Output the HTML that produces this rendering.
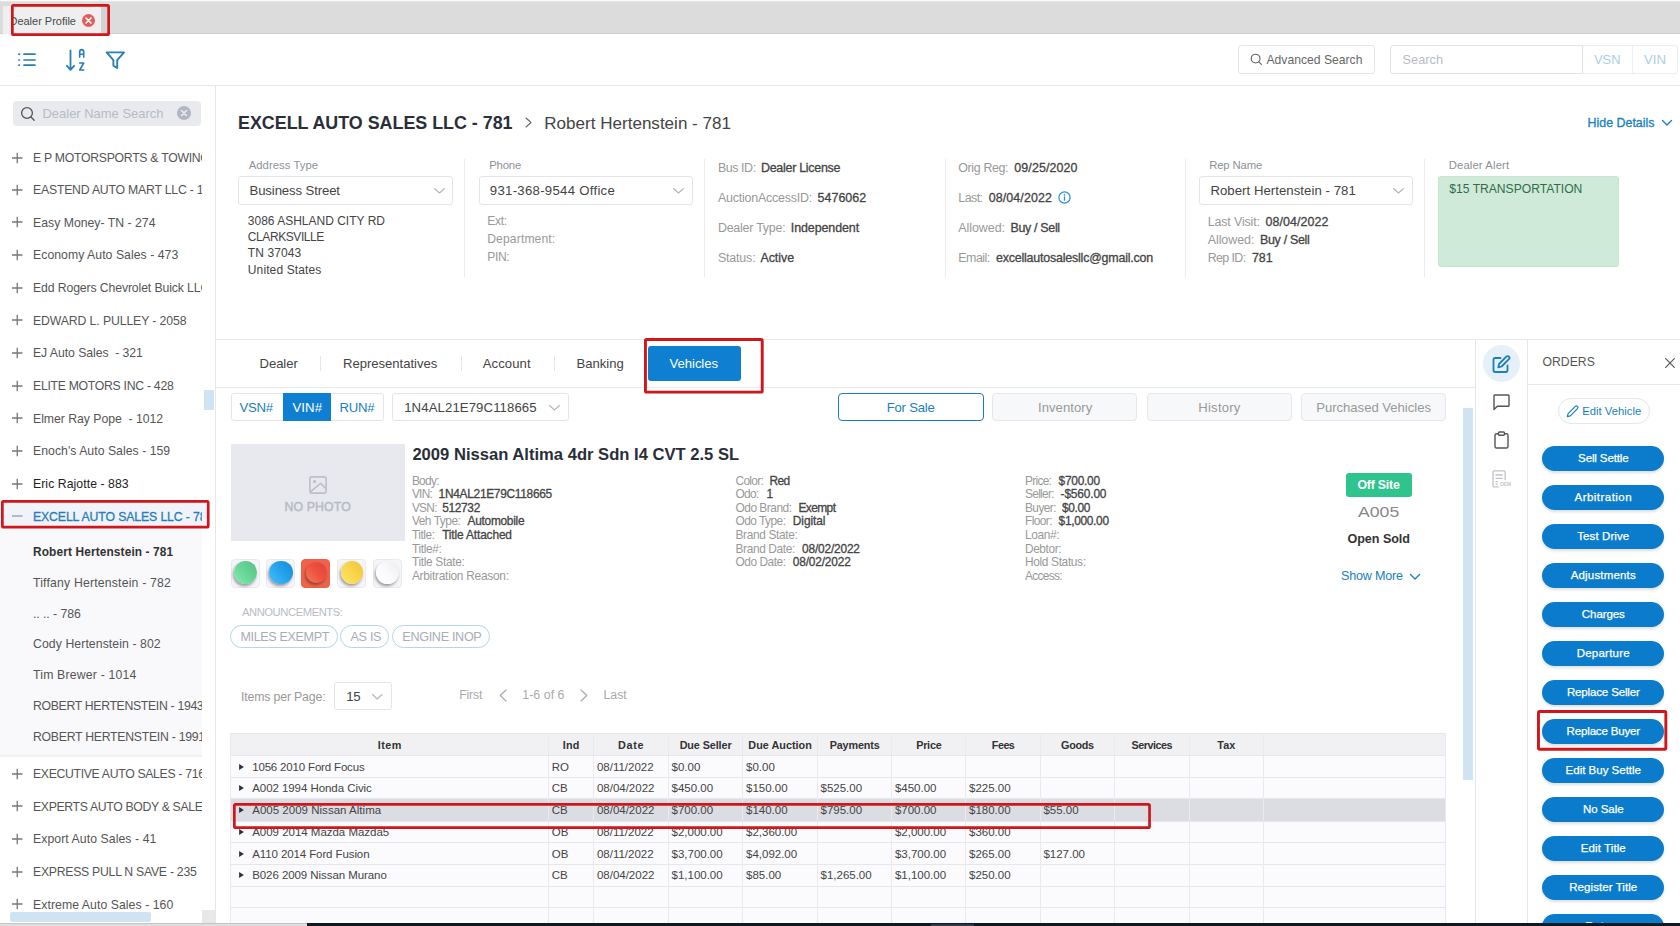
<!DOCTYPE html>
<html><head><meta charset="utf-8"><title>Dealer Profile</title>
<style>
*{box-sizing:border-box;margin:0;padding:0}
html,body{width:1680px;height:926px;overflow:hidden;background:#fff;font-family:"Liberation Sans",sans-serif;}
.a{position:absolute}
.t{position:absolute;white-space:nowrap}
svg{position:absolute;overflow:visible}
.lbl{color:#999}
.val{color:#444;margin-left:5.5px}
.row{position:absolute;white-space:nowrap}
</style></head><body>

<div class="a" style="left:0.0px;top:0.0px;width:1680.0px;height:34.0px;background:#dcdcdc;"></div>
<div class="a" style="left:0.0px;top:0.0px;width:1680.0px;height:1.0px;background:#fafafa;"></div>
<div class="a" style="left:0.0px;top:1.0px;width:1680.0px;height:1.0px;background:#e6e6e6;"></div>
<div class="a" style="left:0.0px;top:33.0px;width:1680.0px;height:1.0px;background:#cfcfcf;"></div>
<div class="a" style="left:3.0px;top:5.5px;width:98.0px;height:28.5px;background:#efefef;"></div>
<div class="a" style="left:101.0px;top:5.5px;width:6.5px;height:27.5px;background:#d3d3d3;"></div>
<div class="a" style="left:12px;top:8px;width:70px;height:24px;overflow:hidden">
<div class="t" style="left:-2.5px;top:5.7px;font-size:10.98px;line-height:14px;color:#484848;">Dealer Profile</div>
</div>
<svg style="left:82px;top:13.5px" width="13" height="13" viewBox="0 0 13 13"><circle cx="6.5" cy="6.5" r="6.5" fill="#e45d5d"/><path d="M4 4l5 5M9 4l-5 5" stroke="#fff" stroke-width="1.6" stroke-linecap="round"/></svg>
<svg style="left:11.0px;top:4.0px" width="99.0" height="32.0" viewBox="0 0 99.0 32.0"><rect x="1.35" y="1.35" width="96.30" height="29.30" rx="1.2" fill="none" stroke="#d0161b" stroke-width="2.7"/></svg>
<div class="a" style="left:0.0px;top:85.0px;width:1680.0px;height:1.0px;background:#e6e6e6;"></div>
<svg style="left:18px;top:53px" width="19" height="14" viewBox="0 0 19 14"><g stroke="#2a7fb3" stroke-width="1.7" stroke-linecap="round"><path d="M6 1.2h11M6 7h11M6 12.1h11"/><path d="M0.9 1.2h0.5M0.9 7h0.5M0.9 12.1h0.5"/></g></svg>
<svg style="left:65px;top:48px" width="21" height="24" viewBox="0 0 21 24"><g fill="none" stroke="#2a7fb3" stroke-width="1.8" stroke-linecap="round" stroke-linejoin="round"><path d="M5.5 2.3v19.3M1.9 17.8l3.6 4 3.6-4"/><path d="M14.7 9.1V4q0-2.4 2-2.4t2 2.4v5.1M14.7 6.3h4" stroke-width="1.6"/><path d="M14.7 15h4l-4 7h4" stroke-width="1.6"/></g></svg>
<svg style="left:105px;top:50.9px" width="21" height="20" viewBox="0 0 21 20"><path d="M1.6 1.4h17.4l-6.8 7.8v7.8l-3.8-2.4v-5.4z" fill="none" stroke="#2a7fb3" stroke-width="1.9" stroke-linejoin="round"/></svg>
<div class="a" style="left:1238.0px;top:45.4px;width:137.0px;height:28.2px;border:1px solid #e5e5e8;border-radius:3px;background:#fff;"></div>
<svg style="left:1250px;top:53px" width="13" height="13" viewBox="0 0 13 13"><circle cx="5.6" cy="5.6" r="4.4" fill="none" stroke="#666" stroke-width="1.15"/><path d="M8.8 8.8l2.6 2.6" stroke="#666" stroke-width="1.15" stroke-linecap="round"/></svg>
<div class="t" style="left:1266.5px;top:51.9px;font-size:12.16px;line-height:16px;color:#666;">Advanced Search</div>
<div class="a" style="left:1582.0px;top:45.4px;width:96.0px;height:28.2px;border:1px solid #eeeef1;border-radius:3px;background:#fff;"></div>
<div class="a" style="left:1390.0px;top:45.4px;width:193.0px;height:28.2px;border:1px solid #e3e3e6;border-radius:3px 0 0 3px;background:#fff;"></div>
<div class="a" style="left:1632.0px;top:46.0px;width:1.0px;height:27.0px;background:#f0f0f3;"></div>
<div class="t" style="left:1402.5px;top:51.0px;font-size:12.79px;line-height:17px;color:#b9bcc4;">Search</div>
<div class="t" style="left:1594.0px;top:51.0px;font-size:12.9px;line-height:17px;color:#a9cfe8;">VSN</div>
<div class="t" style="left:1644.0px;top:51.0px;font-size:13.21px;line-height:17px;color:#a9cfe8;">VIN</div>
<div class="a" style="left:215.0px;top:86.0px;width:1.0px;height:837.0px;background:#e6e6e6;"></div>
<div class="a" style="left:13.0px;top:100.5px;width:187.5px;height:25.5px;background:#e9eaee;border-radius:4px;"></div>
<svg style="left:20px;top:106px" width="16" height="16" viewBox="0 0 16 16"><circle cx="7" cy="7" r="5.4" fill="none" stroke="#555" stroke-width="1.3"/><path d="M11 11l3.2 3.2" stroke="#555" stroke-width="1.3" stroke-linecap="round"/></svg>
<div class="t" style="left:42.5px;top:104.8px;font-size:12.96px;line-height:17px;color:#b7bac3;">Dealer Name Search</div>
<svg style="left:177px;top:106px" width="14" height="14" viewBox="0 0 14 14"><circle cx="7" cy="7" r="7" fill="#b3b5c3"/><path d="M4.5 4.5l5 5M9.5 4.5l-5 5" stroke="#eceef2" stroke-width="1.6" stroke-linecap="round"/></svg>
<div class="a" style="left:0.0px;top:502.0px;width:208.0px;height:26.0px;background:#f0f4fa;"></div>
<div class="a" style="left:0;top:130px;width:201.5px;height:781px;overflow:hidden">
<div class="a" style="left:0.0px;top:372.0px;width:201.5px;height:253.0px;background:#f9f9fc;"></div>
<div class="a" style="left:0.0px;top:372.0px;width:201.5px;height:26.0px;background:#f0f4fa;"></div>
<div class="a" style="left:0.0px;top:625.0px;width:201.5px;height:2.5px;background:linear-gradient(#ebebf0,#fff);"></div>
<svg style="left:11px;top:21.5px" width="12" height="12" viewBox="0 0 12 12"><path d="M1 6h10.5M6.25 0.75v10.5" stroke="#777" stroke-width="1.3"/></svg>
<div class="t" style="left:33.0px;top:19.8px;font-size:12.25px;line-height:16px;color:#555;white-space:pre;letter-spacing:-0.28px;">E P MOTORSPORTS &amp; TOWING - 123</div>
<svg style="left:11px;top:53.8px" width="12" height="12" viewBox="0 0 12 12"><path d="M1 6h10.5M6.25 0.75v10.5" stroke="#777" stroke-width="1.3"/></svg>
<div class="t" style="left:33.0px;top:52.1px;font-size:12.25px;line-height:16px;color:#555;white-space:pre;letter-spacing:-0.21px;">EASTEND AUTO MART LLC - 1234</div>
<svg style="left:11px;top:86.4px" width="12" height="12" viewBox="0 0 12 12"><path d="M1 6h10.5M6.25 0.75v10.5" stroke="#777" stroke-width="1.3"/></svg>
<div class="t" style="left:33.0px;top:84.7px;font-size:12.25px;line-height:16px;color:#555;white-space:pre;letter-spacing:0.01px;">Easy Money- TN - 274</div>
<svg style="left:11px;top:119.1px" width="12" height="12" viewBox="0 0 12 12"><path d="M1 6h10.5M6.25 0.75v10.5" stroke="#777" stroke-width="1.3"/></svg>
<div class="t" style="left:33.0px;top:117.4px;font-size:12.25px;line-height:16px;color:#555;white-space:pre;letter-spacing:0.04px;">Economy Auto Sales - 473</div>
<svg style="left:11px;top:151.7px" width="12" height="12" viewBox="0 0 12 12"><path d="M1 6h10.5M6.25 0.75v10.5" stroke="#777" stroke-width="1.3"/></svg>
<div class="t" style="left:33.0px;top:150.0px;font-size:12.25px;line-height:16px;color:#555;white-space:pre;letter-spacing:-0.12px;">Edd Rogers Chevrolet Buick LLC</div>
<svg style="left:11px;top:184.4px" width="12" height="12" viewBox="0 0 12 12"><path d="M1 6h10.5M6.25 0.75v10.5" stroke="#777" stroke-width="1.3"/></svg>
<div class="t" style="left:33.0px;top:182.7px;font-size:12.25px;line-height:16px;color:#555;white-space:pre;letter-spacing:-0.11px;">EDWARD L. PULLEY - 2058</div>
<svg style="left:11px;top:217.0px" width="12" height="12" viewBox="0 0 12 12"><path d="M1 6h10.5M6.25 0.75v10.5" stroke="#777" stroke-width="1.3"/></svg>
<div class="t" style="left:33.0px;top:215.3px;font-size:12.25px;line-height:16px;color:#555;white-space:pre;letter-spacing:-0.06px;">EJ Auto Sales  - 321</div>
<svg style="left:11px;top:249.7px" width="12" height="12" viewBox="0 0 12 12"><path d="M1 6h10.5M6.25 0.75v10.5" stroke="#777" stroke-width="1.3"/></svg>
<div class="t" style="left:33.0px;top:248.0px;font-size:12.25px;line-height:16px;color:#555;white-space:pre;letter-spacing:-0.29px;">ELITE MOTORS INC - 428</div>
<svg style="left:11px;top:282.3px" width="12" height="12" viewBox="0 0 12 12"><path d="M1 6h10.5M6.25 0.75v10.5" stroke="#777" stroke-width="1.3"/></svg>
<div class="t" style="left:33.0px;top:280.6px;font-size:12.25px;line-height:16px;color:#555;white-space:pre;letter-spacing:-0.03px;">Elmer Ray Pope  - 1012</div>
<svg style="left:11px;top:315.0px" width="12" height="12" viewBox="0 0 12 12"><path d="M1 6h10.5M6.25 0.75v10.5" stroke="#777" stroke-width="1.3"/></svg>
<div class="t" style="left:33.0px;top:313.3px;font-size:12.25px;line-height:16px;color:#555;white-space:pre;letter-spacing:0.03px;">Enoch's Auto Sales - 159</div>
<svg style="left:11px;top:347.6px" width="12" height="12" viewBox="0 0 12 12"><path d="M1 6h10.5M6.25 0.75v10.5" stroke="#777" stroke-width="1.3"/></svg>
<div class="t" style="left:33.0px;top:345.9px;font-size:12.25px;line-height:16px;color:#222;white-space:pre;letter-spacing:0.06px;">Eric Rajotte - 883</div>
<svg style="left:11px;top:380.2px" width="12" height="12" viewBox="0 0 12 12"><path d="M1 6h10.5" stroke="#999" stroke-width="1.3"/></svg>
<div class="t" style="left:33.0px;top:378.5px;font-size:12.25px;line-height:16px;color:#2a7db8;white-space:pre;letter-spacing:-0.11px;-webkit-text-stroke:0.3px #2a7db8;">EXCELL AUTO SALES LLC - 781</div>
<div class="t" style="left:33.0px;top:414.6px;font-size:11.9px;line-height:15px;color:#333;font-weight:bold;white-space:pre;letter-spacing:0.12px;">Robert Hertenstein - 781</div>
<div class="t" style="left:33.0px;top:444.8px;font-size:12.25px;line-height:16px;color:#555;white-space:pre;letter-spacing:0.18px;">Tiffany Hertenstein - 782</div>
<div class="t" style="left:33.0px;top:475.5px;font-size:12.25px;line-height:16px;color:#555;white-space:pre;letter-spacing:-0.06px;">.. .. - 786</div>
<div class="t" style="left:33.0px;top:506.3px;font-size:12.25px;line-height:16px;color:#555;white-space:pre;letter-spacing:0.08px;">Cody Hertenstein - 802</div>
<div class="t" style="left:33.0px;top:537.1px;font-size:12.25px;line-height:16px;color:#555;white-space:pre;letter-spacing:0.19px;">Tim Brewer - 1014</div>
<div class="t" style="left:33.0px;top:567.9px;font-size:12.25px;line-height:16px;color:#555;white-space:pre;letter-spacing:-0.32px;">ROBERT HERTENSTEIN - 1943</div>
<div class="t" style="left:33.0px;top:598.7px;font-size:12.25px;line-height:16px;color:#555;white-space:pre;letter-spacing:-0.26px;">ROBERT HERTENSTEIN - 1991</div>
<svg style="left:11px;top:637.8px" width="12" height="12" viewBox="0 0 12 12"><path d="M1 6h10.5M6.25 0.75v10.5" stroke="#777" stroke-width="1.3"/></svg>
<div class="t" style="left:33.0px;top:636.1px;font-size:12.25px;line-height:16px;color:#555;white-space:pre;letter-spacing:-0.33px;">EXECUTIVE AUTO SALES - 7160</div>
<svg style="left:11px;top:670.4px" width="12" height="12" viewBox="0 0 12 12"><path d="M1 6h10.5M6.25 0.75v10.5" stroke="#777" stroke-width="1.3"/></svg>
<div class="t" style="left:33.0px;top:668.7px;font-size:12.25px;line-height:16px;color:#555;white-space:pre;letter-spacing:-0.34px;">EXPERTS AUTO BODY &amp; SALES</div>
<svg style="left:11px;top:703.1px" width="12" height="12" viewBox="0 0 12 12"><path d="M1 6h10.5M6.25 0.75v10.5" stroke="#777" stroke-width="1.3"/></svg>
<div class="t" style="left:33.0px;top:701.4px;font-size:12.25px;line-height:16px;color:#555;white-space:pre;letter-spacing:0.07px;">Export Auto Sales - 41</div>
<svg style="left:11px;top:735.7px" width="12" height="12" viewBox="0 0 12 12"><path d="M1 6h10.5M6.25 0.75v10.5" stroke="#777" stroke-width="1.3"/></svg>
<div class="t" style="left:33.0px;top:734.0px;font-size:12.25px;line-height:16px;color:#555;white-space:pre;letter-spacing:-0.27px;">EXPRESS PULL N SAVE - 235</div>
<svg style="left:11px;top:768.4px" width="12" height="12" viewBox="0 0 12 12"><path d="M1 6h10.5M6.25 0.75v10.5" stroke="#777" stroke-width="1.3"/></svg>
<div class="t" style="left:33.0px;top:766.7px;font-size:12.25px;line-height:16px;color:#555;white-space:pre;letter-spacing:0.06px;">Extreme Auto Sales - 160</div>
</div>
<svg style="left:1.0px;top:500.2px" width="208.6" height="28.5" viewBox="0 0 208.6 28.5"><rect x="1.35" y="1.35" width="205.90" height="25.80" rx="1.2" fill="none" stroke="#d0161b" stroke-width="2.7"/></svg>
<div class="a" style="left:203.5px;top:390.0px;width:10.0px;height:20.0px;background:#cfe3f3;"></div>
<div class="a" style="left:10.0px;top:912.0px;width:141.0px;height:10.0px;background:#cfe3f3;border-radius:2px;"></div>
<div class="a" style="left:201.5px;top:910.0px;width:13.5px;height:13.0px;background:#e8e8e8;"></div>
<div class="t" style="left:238.0px;top:111.8px;font-size:17.86px;line-height:23px;color:#2a2e38;font-weight:bold;">EXCELL AUTO SALES LLC - 781</div>
<svg style="left:524.5px;top:117px" width="7" height="11" viewBox="0 0 7 11"><path d="M1 1l5 4.5L1 10" fill="none" stroke="#666" stroke-width="1.1" stroke-linecap="round" stroke-linejoin="round"/></svg>
<div class="t" style="left:544.3px;top:112.8px;font-size:17.06px;line-height:22px;color:#444;">Robert Hertenstein - 781</div>
<div class="t" style="left:1587.5px;top:114.9px;font-size:12.43px;line-height:16px;color:#1a7fbf;-webkit-text-stroke:0.3px #1a7fbf;">Hide Details</div>
<svg style="left:1662.3px;top:120.0px" width="10" height="5.5" viewBox="0 0 10 5.5"><path d="M0.5 0.5L5.0 5.0L9.5 0.5" fill="none" stroke="#1a7fbf" stroke-width="1.4" stroke-linecap="round" stroke-linejoin="round"/></svg>
<div class="a" style="left:464.0px;top:159.0px;width:1.0px;height:117.5px;background:#ececee;"></div>
<div class="a" style="left:704.0px;top:159.0px;width:1.0px;height:117.5px;background:#ececee;"></div>
<div class="a" style="left:945.0px;top:159.0px;width:1.0px;height:117.5px;background:#ececee;"></div>
<div class="a" style="left:1185.0px;top:159.0px;width:1.0px;height:117.5px;background:#ececee;"></div>
<div class="a" style="left:1424.0px;top:159.0px;width:1.0px;height:117.5px;background:#ececee;"></div>
<div class="t" style="left:248.7px;top:158.0px;font-size:11.3px;line-height:15px;color:#8d9199;letter-spacing:0.04px;">Address Type</div>
<div class="a" style="left:238.3px;top:176.3px;width:215.0px;height:28.4px;border:1px solid #e4e5ea;border-radius:3px;background:#fff;"></div>
<div class="t" style="left:249.5px;top:181.8px;font-size:13.2px;line-height:17px;color:#444;letter-spacing:-0.13px;">Business Street</div>
<svg style="left:433.8px;top:187.9px" width="11" height="5.5" viewBox="0 0 11 5.5"><path d="M0.5 0.5L5.5 5.0L10.5 0.5" fill="none" stroke="#b4b4b8" stroke-width="1.05" stroke-linecap="round" stroke-linejoin="round"/></svg>
<div class="t" style="left:247.8px;top:212.6px;font-size:12.0px;line-height:16px;color:#444;">3086 ASHLAND CITY RD</div>
<div class="t" style="left:247.8px;top:228.9px;font-size:12.0px;line-height:16px;color:#444;letter-spacing:-0.42px;">CLARKSVILLE</div>
<div class="t" style="left:247.8px;top:245.2px;font-size:12.0px;line-height:16px;color:#444;letter-spacing:0.11px;">TN 37043</div>
<div class="t" style="left:247.8px;top:261.5px;font-size:12.0px;line-height:16px;color:#444;letter-spacing:0.12px;">United States</div>
<div class="t" style="left:489.2px;top:158.0px;font-size:11.3px;line-height:15px;color:#8d9199;letter-spacing:-0.17px;">Phone</div>
<div class="a" style="left:478.5px;top:176.3px;width:214.2px;height:28.4px;border:1px solid #e4e5ea;border-radius:3px;background:#fff;"></div>
<div class="t" style="left:489.8px;top:181.8px;font-size:13.2px;line-height:17px;color:#444;letter-spacing:0.28px;">931-368-9544 Office</div>
<svg style="left:672.8px;top:187.9px" width="11" height="5.5" viewBox="0 0 11 5.5"><path d="M0.5 0.5L5.5 5.0L10.5 0.5" fill="none" stroke="#b4b4b8" stroke-width="1.05" stroke-linecap="round" stroke-linejoin="round"/></svg>
<div class="t" style="left:487.2px;top:212.9px;font-size:12.1px;line-height:16px;color:#999;letter-spacing:-0.28px;">Ext:</div>
<div class="t" style="left:487.2px;top:231.1px;font-size:12.1px;line-height:16px;color:#999;letter-spacing:0.15px;">Department:</div>
<div class="t" style="left:487.2px;top:249.3px;font-size:12.1px;line-height:16px;color:#999;letter-spacing:-0.34px;">PIN:</div>
<div class="t" style="left:717.9px;top:160.0px;font-size:12.45px;line-height:16px;color:#999;letter-spacing:-0.43px;">Bus ID:</div>
<div class="t" style="left:761.0px;top:160.0px;font-size:12.45px;line-height:16px;color:#444;letter-spacing:-0.27px;-webkit-text-stroke:0.3px #444;">Dealer License</div>
<div class="t" style="left:717.9px;top:189.8px;font-size:12.45px;line-height:16px;color:#999;letter-spacing:-0.21px;">AuctionAccessID:</div>
<div class="t" style="left:817.6px;top:189.8px;font-size:12.45px;line-height:16px;color:#444;letter-spacing:0.01px;-webkit-text-stroke:0.3px #444;">5476062</div>
<div class="t" style="left:717.9px;top:219.6px;font-size:12.45px;line-height:16px;color:#999;letter-spacing:-0.23px;">Dealer Type:</div>
<div class="t" style="left:790.8px;top:219.6px;font-size:12.45px;line-height:16px;color:#444;letter-spacing:-0.08px;-webkit-text-stroke:0.3px #444;">Independent</div>
<div class="t" style="left:717.9px;top:249.7px;font-size:12.45px;line-height:16px;color:#999;letter-spacing:-0.17px;">Status:</div>
<div class="t" style="left:760.4px;top:249.7px;font-size:12.45px;line-height:16px;color:#444;letter-spacing:-0.02px;-webkit-text-stroke:0.3px #444;">Active</div>
<div class="t" style="left:958.3px;top:160.0px;font-size:12.45px;line-height:16px;color:#999;letter-spacing:-0.37px;">Orig Reg:</div>
<div class="t" style="left:1014.3px;top:160.0px;font-size:12.45px;line-height:16px;color:#444;letter-spacing:0.11px;-webkit-text-stroke:0.3px #444;">09/25/2020</div>
<div class="t" style="left:958.3px;top:189.8px;font-size:12.45px;line-height:16px;color:#999;letter-spacing:-0.57px;">Last:</div>
<div class="t" style="left:988.7px;top:189.8px;font-size:12.45px;line-height:16px;color:#444;letter-spacing:0.11px;-webkit-text-stroke:0.3px #444;">08/04/2022</div>
<svg style="left:1057.5px;top:190.7px" width="13" height="13" viewBox="0 0 13 13"><circle cx="6.5" cy="6.5" r="5.6" fill="none" stroke="#2a8fd0" stroke-width="1.2"/><path d="M6.5 5.8v3.4" stroke="#2a8fd0" stroke-width="1.3" stroke-linecap="round"/><circle cx="6.5" cy="3.9" r="0.8" fill="#2a8fd0"/></svg>
<div class="t" style="left:958.3px;top:219.6px;font-size:12.45px;line-height:16px;color:#999;letter-spacing:-0.05px;">Allowed:</div>
<div class="t" style="left:1010.4px;top:219.6px;font-size:12.45px;line-height:16px;color:#444;letter-spacing:-0.31px;-webkit-text-stroke:0.3px #444;">Buy / Sell</div>
<div class="t" style="left:958.3px;top:249.7px;font-size:12.45px;line-height:16px;color:#999;letter-spacing:-0.51px;">Email:</div>
<div class="t" style="left:996.0px;top:249.7px;font-size:12.45px;line-height:16px;color:#444;letter-spacing:-0.20px;-webkit-text-stroke:0.3px #444;">excellautosalesllc@gmail.con</div>
<div class="t" style="left:1209.2px;top:158.0px;font-size:11.3px;line-height:15px;color:#8d9199;letter-spacing:-0.14px;">Rep Name</div>
<div class="a" style="left:1198.5px;top:176.3px;width:214.7px;height:28.4px;border:1px solid #e4e5ea;border-radius:3px;background:#fff;"></div>
<div class="t" style="left:1210.4px;top:181.8px;font-size:13.2px;line-height:17px;color:#444;letter-spacing:0.04px;">Robert Hertenstein - 781</div>
<svg style="left:1393.2px;top:187.9px" width="11" height="5.5" viewBox="0 0 11 5.5"><path d="M0.5 0.5L5.5 5.0L10.5 0.5" fill="none" stroke="#b4b4b8" stroke-width="1.05" stroke-linecap="round" stroke-linejoin="round"/></svg>
<div class="t" style="left:1207.7px;top:213.6px;font-size:12.45px;line-height:16px;color:#999;letter-spacing:-0.14px;">Last Visit:</div>
<div class="t" style="left:1265.4px;top:213.6px;font-size:12.45px;line-height:16px;color:#444;letter-spacing:0.08px;-webkit-text-stroke:0.3px #444;">08/04/2022</div>
<div class="t" style="left:1207.7px;top:231.8px;font-size:12.45px;line-height:16px;color:#999;letter-spacing:-0.05px;">Allowed:</div>
<div class="t" style="left:1260.0px;top:231.8px;font-size:12.45px;line-height:16px;color:#444;letter-spacing:-0.31px;-webkit-text-stroke:0.3px #444;">Buy / Sell</div>
<div class="t" style="left:1207.7px;top:250.0px;font-size:12.45px;line-height:16px;color:#999;letter-spacing:-0.61px;">Rep ID:</div>
<div class="t" style="left:1252.0px;top:250.0px;font-size:12.45px;line-height:16px;color:#444;letter-spacing:-0.08px;-webkit-text-stroke:0.3px #444;">781</div>
<div class="t" style="left:1448.8px;top:158.0px;font-size:11.3px;line-height:15px;color:#8d9199;letter-spacing:0.11px;">Dealer Alert</div>
<div class="a" style="left:1438.0px;top:176.3px;width:181.2px;height:90.5px;background:#cfead8;border:1px solid #c5e6cf;border-radius:3px;"></div>
<div class="t" style="left:1449.3px;top:180.8px;font-size:12.11px;line-height:16px;color:#2f6d48;">$15 TRANSPORTATION</div>
<div class="a" style="left:216.0px;top:339.0px;width:1464.0px;height:1.0px;background:#e6e6e6;"></div>
<div class="a" style="left:216.0px;top:387.0px;width:1260.0px;height:1.0px;background:#e9e9ec;"></div>
<div class="t" style="left:259.6px;top:354.9px;font-size:13.1px;line-height:17px;color:#444;letter-spacing:-0.08px;">Dealer</div>
<div class="t" style="left:343.0px;top:354.9px;font-size:13.1px;line-height:17px;color:#444;letter-spacing:-0.02px;">Representatives</div>
<div class="t" style="left:482.8px;top:354.9px;font-size:13.1px;line-height:17px;color:#444;letter-spacing:0.08px;">Account</div>
<div class="t" style="left:576.4px;top:354.9px;font-size:13.1px;line-height:17px;color:#444;letter-spacing:0.03px;">Banking</div>
<div class="a" style="left:320.0px;top:355.7px;width:1.0px;height:15.7px;background:#e6e6ea;"></div>
<div class="a" style="left:461.0px;top:355.7px;width:1.0px;height:15.7px;background:#e6e6ea;"></div>
<div class="a" style="left:554.0px;top:355.7px;width:1.0px;height:15.7px;background:#e6e6ea;"></div>
<div class="a" style="left:647.8px;top:346.0px;width:93.2px;height:35.0px;background:#0e7fd1;border-radius:3px;"></div>
<div class="t" style="left:669.6px;top:354.8px;font-size:13.1px;line-height:17px;color:#fff;letter-spacing:-0.05px;">Vehicles</div>
<svg style="left:644.2px;top:338.0px" width="119.7" height="55.6" viewBox="0 0 119.7 55.6"><rect x="1.45" y="1.45" width="116.80" height="52.70" rx="1.2" fill="none" stroke="#d0161b" stroke-width="2.9"/></svg>
<div class="a" style="left:1475.0px;top:340.0px;width:1.0px;height:583.0px;background:#e6e6e6;"></div>
<div class="a" style="left:1527.0px;top:340.0px;width:1.0px;height:583.0px;background:#e6e6e6;"></div>
<div class="a" style="left:1528.0px;top:384.0px;width:152.0px;height:1.0px;background:#e9e9ec;"></div>
<div class="a" style="left:1482.5px;top:345px;width:37px;height:37px;border-radius:50%;background:#e6f0f8"></div>
<svg style="left:1491.5px;top:354.5px" width="19" height="19" viewBox="0 0 19 19"><g fill="none" stroke="#1a7fbf" stroke-width="1.8" stroke-linecap="round" stroke-linejoin="round"><path d="M8.5 3H3.2Q1.5 3 1.5 4.7v10.6Q1.5 17 3.2 17h10.6q1.7 0 1.7-1.7V10.5"/><path d="M14.3 1.6a1.6 1.6 0 0 1 2.6 2.6L9.6 11.5l-3.3.8.8-3.3z"/></g></svg>
<svg style="left:1492.5px;top:393.8px" width="17" height="17" viewBox="0 0 17 17"><path d="M1 1.8q0-.8.8-.8h13.4q.8 0 .8.8v9.6q0 .8-.8.8H4.3L1 15.5z" fill="none" stroke="#555" stroke-width="1.4" stroke-linejoin="round"/></svg>
<svg style="left:1493.8px;top:431px" width="15" height="18" viewBox="0 0 15 18"><g fill="none" stroke="#555" stroke-width="1.4" stroke-linejoin="round"><path d="M4.5 2.8H2.6Q1 2.8 1 4.4v11q0 1.6 1.6 1.6h9.8q1.6 0 1.6-1.6v-11q0-1.6-1.6-1.6h-1.9"/><rect x="4.5" y="1" width="6" height="3.2" rx="1"/></g></svg>
<svg style="left:1492.3px;top:470px" width="19" height="18" viewBox="0 0 19 18"><g fill="none" stroke="#c2c4c9" stroke-width="1.3" stroke-linecap="round" stroke-linejoin="round"><path d="M6 16.9H2.5Q1 16.9 1 15.4V2.3Q1 .8 2.5.8h9.2q1.5 0 1.5 1.5V9.5"/><path d="M4 5h6.3M4 8.3h6.3M4 11.7h1.3M4 14.2h1.3"/></g></svg>
<div class="t" style="left:1500px;top:481.2px;font-size:6px;line-height:7px;font-weight:bold;color:#c6c8cd;letter-spacing:-0.1px;transform:scaleX(.82);transform-origin:left">OEM</div>
<div class="t" style="left:1542.5px;top:353.6px;font-size:12.22px;line-height:16px;color:#555;">ORDERS</div>
<svg style="left:1665px;top:357.5px" width="10" height="10" viewBox="0 0 10 10"><path d="M0.7 0.7l8.6 8.6M9.3 0.7L0.7 9.3" stroke="#555" stroke-width="1.2" stroke-linecap="round"/></svg>
<div class="a" style="left:1557.5px;top:398.3px;width:92.0px;height:26.1px;border:1px solid #e4e6ed;border-radius:13px;background:#fff;"></div>
<svg style="left:1566px;top:405px" width="13" height="13" viewBox="0 0 13 13"><path d="M9.3 1.4a1.5 1.5 0 0 1 2.2 2.2L4.3 10.9l-2.9.7.7-2.9z" fill="none" stroke="#1a7fbf" stroke-width="1.2" stroke-linejoin="round"/></svg>
<div class="t" style="left:1582.3px;top:403.8px;font-size:11.29px;line-height:15px;color:#1a7fbf;">Edit Vehicle</div>
<div class="a" style="left:1542.0px;top:446.0px;width:122.4px;height:24.7px;background:#0b7ccc;border-radius:12.5px;box-shadow:0 2px 3px rgba(0,0,0,.13);"></div>
<div class="t" style="left:1603.3px;top:450.7px;font-size:11.5px;line-height:15px;color:#fff;letter-spacing:-0.13px;transform:translateX(-50%);-webkit-text-stroke:0.25px #fff;">Sell Settle</div>
<div class="a" style="left:1542.0px;top:485.0px;width:122.4px;height:24.7px;background:#0b7ccc;border-radius:12.5px;box-shadow:0 2px 3px rgba(0,0,0,.13);"></div>
<div class="t" style="left:1603.3px;top:489.7px;font-size:11.5px;line-height:15px;color:#fff;letter-spacing:0.46px;transform:translateX(-50%);-webkit-text-stroke:0.25px #fff;">Arbitration</div>
<div class="a" style="left:1542.0px;top:524.0px;width:122.4px;height:24.7px;background:#0b7ccc;border-radius:12.5px;box-shadow:0 2px 3px rgba(0,0,0,.13);"></div>
<div class="t" style="left:1603.3px;top:528.7px;font-size:11.5px;line-height:15px;color:#fff;letter-spacing:0.10px;transform:translateX(-50%);-webkit-text-stroke:0.25px #fff;">Test Drive</div>
<div class="a" style="left:1542.0px;top:563.0px;width:122.4px;height:24.7px;background:#0b7ccc;border-radius:12.5px;box-shadow:0 2px 3px rgba(0,0,0,.13);"></div>
<div class="t" style="left:1603.3px;top:567.7px;font-size:11.5px;line-height:15px;color:#fff;letter-spacing:0.17px;transform:translateX(-50%);-webkit-text-stroke:0.25px #fff;">Adjustments</div>
<div class="a" style="left:1542.0px;top:602.0px;width:122.4px;height:24.7px;background:#0b7ccc;border-radius:12.5px;box-shadow:0 2px 3px rgba(0,0,0,.13);"></div>
<div class="t" style="left:1603.3px;top:606.7px;font-size:11.5px;line-height:15px;color:#fff;letter-spacing:-0.08px;transform:translateX(-50%);-webkit-text-stroke:0.25px #fff;">Charges</div>
<div class="a" style="left:1542.0px;top:641.0px;width:122.4px;height:24.7px;background:#0b7ccc;border-radius:12.5px;box-shadow:0 2px 3px rgba(0,0,0,.13);"></div>
<div class="t" style="left:1603.3px;top:645.7px;font-size:11.5px;line-height:15px;color:#fff;letter-spacing:0.23px;transform:translateX(-50%);-webkit-text-stroke:0.25px #fff;">Departure</div>
<div class="a" style="left:1542.0px;top:679.9px;width:122.4px;height:24.7px;background:#0b7ccc;border-radius:12.5px;box-shadow:0 2px 3px rgba(0,0,0,.13);"></div>
<div class="t" style="left:1603.3px;top:684.6px;font-size:11.5px;line-height:15px;color:#fff;letter-spacing:-0.14px;transform:translateX(-50%);-webkit-text-stroke:0.25px #fff;">Replace Seller</div>
<div class="a" style="left:1542.0px;top:718.9px;width:122.4px;height:24.7px;background:#0b7ccc;border-radius:12.5px;box-shadow:0 2px 3px rgba(0,0,0,.13);"></div>
<div class="t" style="left:1603.3px;top:723.6px;font-size:11.5px;line-height:15px;color:#fff;letter-spacing:-0.16px;transform:translateX(-50%);-webkit-text-stroke:0.25px #fff;">Replace Buyer</div>
<div class="a" style="left:1542.0px;top:757.9px;width:122.4px;height:24.7px;background:#0b7ccc;border-radius:12.5px;box-shadow:0 2px 3px rgba(0,0,0,.13);"></div>
<div class="t" style="left:1603.3px;top:762.6px;font-size:11.5px;line-height:15px;color:#fff;transform:translateX(-50%);-webkit-text-stroke:0.25px #fff;">Edit Buy Settle</div>
<div class="a" style="left:1542.0px;top:796.9px;width:122.4px;height:24.7px;background:#0b7ccc;border-radius:12.5px;box-shadow:0 2px 3px rgba(0,0,0,.13);"></div>
<div class="t" style="left:1603.3px;top:801.6px;font-size:11.5px;line-height:15px;color:#fff;letter-spacing:-0.07px;transform:translateX(-50%);-webkit-text-stroke:0.25px #fff;">No Sale</div>
<div class="a" style="left:1542.0px;top:835.9px;width:122.4px;height:24.7px;background:#0b7ccc;border-radius:12.5px;box-shadow:0 2px 3px rgba(0,0,0,.13);"></div>
<div class="t" style="left:1603.3px;top:840.6px;font-size:11.5px;line-height:15px;color:#fff;letter-spacing:0.10px;transform:translateX(-50%);-webkit-text-stroke:0.25px #fff;">Edit Title</div>
<div class="a" style="left:1542.0px;top:874.9px;width:122.4px;height:24.7px;background:#0b7ccc;border-radius:12.5px;box-shadow:0 2px 3px rgba(0,0,0,.13);"></div>
<div class="t" style="left:1603.3px;top:879.6px;font-size:11.5px;line-height:15px;color:#fff;letter-spacing:0.07px;transform:translateX(-50%);-webkit-text-stroke:0.25px #fff;">Register Title</div>
<div class="a" style="left:1542.0px;top:913.9px;width:122.4px;height:24.7px;background:#0b7ccc;border-radius:12.5px;box-shadow:0 2px 3px rgba(0,0,0,.13);"></div>
<div class="t" style="left:1603.3px;top:918.6px;font-size:11.5px;line-height:15px;color:#fff;letter-spacing:0.29px;transform:translateX(-50%);-webkit-text-stroke:0.25px #fff;">Return</div>
<svg style="left:1537.0px;top:710.2px" width="130.3" height="40.7" viewBox="0 0 130.3 40.7"><rect x="1.45" y="1.45" width="127.40" height="37.80" rx="1.2" fill="none" stroke="#d0161b" stroke-width="2.9"/></svg>
<div class="a" style="left:230.8px;top:392.8px;width:153.2px;height:28.7px;border:1px solid #e4e5ea;border-radius:3px;background:#fff;"></div>
<div class="a" style="left:283.0px;top:392.8px;width:47.6px;height:28.7px;background:#0f7fd1;"></div>
<div class="t" style="left:239.6px;top:398.5px;font-size:13.2px;line-height:17px;color:#1a7fbf;letter-spacing:-0.32px;">VSN#</div>
<div class="t" style="left:292.5px;top:398.5px;font-size:13.2px;line-height:17px;color:#fff;letter-spacing:0.06px;">VIN#</div>
<div class="t" style="left:339.5px;top:398.5px;font-size:13.2px;line-height:17px;color:#1a7fbf;letter-spacing:-0.30px;">RUN#</div>
<div class="a" style="left:392.0px;top:392.8px;width:176.6px;height:28.7px;border:1px solid #e4e5ea;border-radius:3px;background:#fff;"></div>
<div class="t" style="left:404.2px;top:398.5px;font-size:13.2px;line-height:17px;color:#444;letter-spacing:0.09px;">1N4AL21E79C118665</div>
<svg style="left:548.8px;top:404.8px" width="11" height="5.5" viewBox="0 0 11 5.5"><path d="M0.5 0.5L5.5 5.0L10.5 0.5" fill="none" stroke="#b4b4b8" stroke-width="1.05" stroke-linecap="round" stroke-linejoin="round"/></svg>
<div class="a" style="left:838.0px;top:392.6px;width:145.5px;height:28.9px;border:1px solid #1a7fbf;border-radius:4px;background:#fff;"></div>
<div class="t" style="left:886.7px;top:398.5px;font-size:13.1px;line-height:17px;color:#1a7fbf;letter-spacing:-0.21px;">For Sale</div>
<div class="a" style="left:992.4px;top:392.6px;width:145.1px;height:28.9px;border:1px solid #e6e7ec;border-radius:4px;background:#f7f8fa;"></div>
<div class="t" style="left:1038.0px;top:398.5px;font-size:13.1px;line-height:17px;color:#999;letter-spacing:0.04px;">Inventory</div>
<div class="a" style="left:1146.8px;top:392.6px;width:145.1px;height:28.9px;border:1px solid #e6e7ec;border-radius:4px;background:#f7f8fa;"></div>
<div class="t" style="left:1198.3px;top:398.5px;font-size:13.1px;line-height:17px;color:#999;letter-spacing:0.23px;">History</div>
<div class="a" style="left:1301.3px;top:392.6px;width:144.3px;height:28.9px;border:1px solid #e6e7ec;border-radius:4px;background:#f7f8fa;"></div>
<div class="t" style="left:1316.2px;top:398.5px;font-size:13.1px;line-height:17px;color:#999;letter-spacing:-0.01px;">Purchased Vehicles</div>
<div class="a" style="left:1462.6px;top:408.0px;width:10.6px;height:372.0px;background:#cfe3f3;"></div>
<div class="a" style="left:231.0px;top:444.0px;width:174.0px;height:97.0px;background:#e8e9ee;"></div>
<svg style="left:308.8px;top:475.5px" width="18" height="18" viewBox="0 0 18 18"><g fill="none" stroke="#bcbfca" stroke-width="1.6" stroke-linejoin="round" stroke-linecap="round"><rect x="0.9" y="0.9" width="16.2" height="16.2" rx="1.8"/><path d="M1.6 15.6L11.6 7.4l5 4.8"/></g><circle cx="5.6" cy="5.6" r="1.7" fill="#bcbfca"/></svg>
<div class="t" style="left:284.5px;top:498.8px;font-size:12.3px;line-height:16px;color:#b7bac5;letter-spacing:0.13px;-webkit-text-stroke:0.45px #b7bac5;">NO PHOTO</div>
<div class="a" style="left:230.6px;top:559.0px;width:29.0px;height:28.7px;background:#f5f5fa;border:1px solid #e9e9f2;border-radius:4px;"></div>
<div class="a" style="left:233.6px;top:561.0px;width:23.4px;height:23.4px;border-radius:50%;background:linear-gradient(50deg,#82eaae 5%,#66d596 50%,#56c486 95%);box-shadow:-1px 2px 3px rgba(0,0,0,.38);"></div>
<div class="a" style="left:266.3px;top:559.0px;width:29.0px;height:28.7px;background:#f5f5fa;border:1px solid #e9e9f2;border-radius:4px;"></div>
<div class="a" style="left:269.3px;top:561.0px;width:23.4px;height:23.4px;border-radius:50%;background:linear-gradient(50deg,#45bdf8 5%,#25a3ec 50%,#168cd9 95%);box-shadow:-1px 2px 3px rgba(0,0,0,.38);"></div>
<div class="a" style="left:301.4px;top:559.0px;width:29.0px;height:28.7px;background:#f0634a;border:1px solid #ee5f46;border-radius:4px;"></div>
<div class="a" style="left:305.6px;top:562.2px;width:21px;height:21px;border-radius:50%;background:linear-gradient(50deg,#f4755a 5%,#ec5340 50%,#e6413a 95%);box-shadow:-1px 2px 3px rgba(0,0,0,.38);"></div>
<div class="a" style="left:337.2px;top:559.0px;width:29.0px;height:28.7px;background:#f5f5fa;border:1px solid #e9e9f2;border-radius:4px;"></div>
<div class="a" style="left:340.6px;top:561.4px;width:22.6px;height:22.6px;border-radius:50%;background:linear-gradient(50deg,#fde467 5%,#f8d64c 50%,#f0c535 95%);box-shadow:-1px 2px 3px rgba(0,0,0,.38);"></div>
<div class="a" style="left:372.5px;top:559.0px;width:29.0px;height:28.7px;background:#f5f5fa;border:1px solid #e9e9f2;border-radius:4px;"></div>
<div class="a" style="left:375.5px;top:561.0px;width:23.4px;height:23.4px;border-radius:50%;background:linear-gradient(50deg,#ffffff 5%,#fafafa 50%,#ededed 95%);box-shadow:-1px 2px 3px rgba(0,0,0,.38);"></div>
<div class="t" style="left:412.4px;top:444.0px;font-size:16.6px;line-height:22px;color:#2a2e38;font-weight:bold;">2009 Nissan Altima 4dr Sdn I4 CVT 2.5 SL</div>
<div class="t" style="left:411.9px;top:473.5px;font-size:11.9px;line-height:15px;color:#999;letter-spacing:-0.70px;">Body:</div>
<div class="t" style="left:411.9px;top:487.1px;font-size:11.9px;line-height:15px;color:#999;letter-spacing:-0.70px;">VIN:</div>
<div class="t" style="left:438.6px;top:487.1px;font-size:11.9px;line-height:15px;color:#444;letter-spacing:-0.28px;-webkit-text-stroke:0.3px #444;">1N4AL21E79C118665</div>
<div class="t" style="left:411.9px;top:500.7px;font-size:11.9px;line-height:15px;color:#999;letter-spacing:-0.70px;">VSN:</div>
<div class="t" style="left:442.2px;top:500.7px;font-size:11.9px;line-height:15px;color:#444;letter-spacing:-0.32px;-webkit-text-stroke:0.3px #444;">512732</div>
<div class="t" style="left:411.9px;top:514.4px;font-size:11.9px;line-height:15px;color:#999;letter-spacing:-0.46px;">Veh Type:</div>
<div class="t" style="left:467.5px;top:514.4px;font-size:11.9px;line-height:15px;color:#444;letter-spacing:-0.27px;-webkit-text-stroke:0.3px #444;">Automobile</div>
<div class="t" style="left:411.9px;top:528.0px;font-size:11.9px;line-height:15px;color:#999;letter-spacing:-0.43px;">Title:</div>
<div class="t" style="left:442.2px;top:528.0px;font-size:11.9px;line-height:15px;color:#444;letter-spacing:-0.14px;-webkit-text-stroke:0.3px #444;">Title Attached</div>
<div class="t" style="left:411.9px;top:541.6px;font-size:11.9px;line-height:15px;color:#999;letter-spacing:-0.33px;">Title#:</div>
<div class="t" style="left:411.9px;top:555.2px;font-size:11.9px;line-height:15px;color:#999;letter-spacing:-0.31px;">Title State:</div>
<div class="t" style="left:411.9px;top:568.8px;font-size:11.9px;line-height:15px;color:#999;letter-spacing:-0.26px;">Arbitration Reason:</div>
<div class="t" style="left:735.5px;top:473.5px;font-size:11.9px;line-height:15px;color:#999;letter-spacing:-0.70px;">Color:</div>
<div class="t" style="left:769.6px;top:473.5px;font-size:11.9px;line-height:15px;color:#444;letter-spacing:-0.70px;-webkit-text-stroke:0.3px #444;">Red</div>
<div class="t" style="left:735.5px;top:487.1px;font-size:11.9px;line-height:15px;color:#999;letter-spacing:-0.70px;">Odo:</div>
<div class="t" style="left:766.6px;top:487.1px;font-size:11.9px;line-height:15px;color:#444;-webkit-text-stroke:0.3px #444;">1</div>
<div class="t" style="left:735.5px;top:500.7px;font-size:11.9px;line-height:15px;color:#999;letter-spacing:-0.48px;">Odo Brand:</div>
<div class="t" style="left:798.4px;top:500.7px;font-size:11.9px;line-height:15px;color:#444;letter-spacing:-0.54px;-webkit-text-stroke:0.3px #444;">Exempt</div>
<div class="t" style="left:735.5px;top:514.4px;font-size:11.9px;line-height:15px;color:#999;letter-spacing:-0.52px;">Odo Type:</div>
<div class="t" style="left:792.8px;top:514.4px;font-size:11.9px;line-height:15px;color:#444;letter-spacing:-0.06px;-webkit-text-stroke:0.3px #444;">Digital</div>
<div class="t" style="left:735.5px;top:528.0px;font-size:11.9px;line-height:15px;color:#999;letter-spacing:-0.34px;">Brand State:</div>
<div class="t" style="left:735.5px;top:541.6px;font-size:11.9px;line-height:15px;color:#999;letter-spacing:-0.37px;">Brand Date:</div>
<div class="t" style="left:802.0px;top:541.6px;font-size:11.9px;line-height:15px;color:#444;letter-spacing:-0.17px;-webkit-text-stroke:0.3px #444;">08/02/2022</div>
<div class="t" style="left:735.5px;top:555.2px;font-size:11.9px;line-height:15px;color:#999;letter-spacing:-0.46px;">Odo Date:</div>
<div class="t" style="left:792.8px;top:555.2px;font-size:11.9px;line-height:15px;color:#444;letter-spacing:-0.17px;-webkit-text-stroke:0.3px #444;">08/02/2022</div>
<div class="t" style="left:1025.0px;top:473.5px;font-size:11.9px;line-height:15px;color:#999;letter-spacing:-0.70px;">Price:</div>
<div class="t" style="left:1058.6px;top:473.5px;font-size:11.9px;line-height:15px;color:#444;letter-spacing:-0.26px;-webkit-text-stroke:0.3px #444;">$700.00</div>
<div class="t" style="left:1025.0px;top:487.1px;font-size:11.9px;line-height:15px;color:#999;letter-spacing:-0.70px;">Seller:</div>
<div class="t" style="left:1060.6px;top:487.1px;font-size:11.9px;line-height:15px;color:#444;letter-spacing:-0.15px;-webkit-text-stroke:0.3px #444;">-$560.00</div>
<div class="t" style="left:1025.0px;top:500.7px;font-size:11.9px;line-height:15px;color:#999;letter-spacing:-0.57px;">Buyer:</div>
<div class="t" style="left:1062.0px;top:500.7px;font-size:11.9px;line-height:15px;color:#444;letter-spacing:-0.34px;-webkit-text-stroke:0.3px #444;">$0.00</div>
<div class="t" style="left:1025.0px;top:514.4px;font-size:11.9px;line-height:15px;color:#999;letter-spacing:-0.58px;">Floor:</div>
<div class="t" style="left:1058.6px;top:514.4px;font-size:11.9px;line-height:15px;color:#444;letter-spacing:-0.31px;-webkit-text-stroke:0.3px #444;">$1,000.00</div>
<div class="t" style="left:1025.0px;top:528.0px;font-size:11.9px;line-height:15px;color:#999;letter-spacing:-0.38px;">Loan#:</div>
<div class="t" style="left:1025.0px;top:541.6px;font-size:11.9px;line-height:15px;color:#999;letter-spacing:-0.42px;">Debtor:</div>
<div class="t" style="left:1025.0px;top:555.2px;font-size:11.9px;line-height:15px;color:#999;letter-spacing:-0.34px;">Hold Status:</div>
<div class="t" style="left:1025.0px;top:568.8px;font-size:11.9px;line-height:15px;color:#999;letter-spacing:-0.70px;">Access:</div>
<div class="a" style="left:1345.8px;top:473.3px;width:65.8px;height:23.5px;background:#2fc48d;border-radius:3px;"></div>
<div class="t" style="left:1357.4px;top:477.2px;font-size:12.3px;line-height:16px;color:#fff;font-weight:bold;letter-spacing:-0.20px;">Off Site</div>
<div class="t" style="left:1358px;top:501.9px;font-size:14.3px;line-height:20px;color:#888;transform:scaleX(1.235);transform-origin:left">A005</div>
<div class="t" style="left:1347.5px;top:530.7px;font-size:12.6px;line-height:16px;color:#333;font-weight:bold;letter-spacing:-0.06px;">Open Sold</div>
<div class="t" style="left:1341.0px;top:568.0px;font-size:12.6px;line-height:16px;color:#1a7fbf;letter-spacing:-0.21px;">Show More</div>
<svg style="left:1410.2px;top:573.5px" width="10" height="5.5" viewBox="0 0 10 5.5"><path d="M0.5 0.5L5.0 5.0L9.5 0.5" fill="none" stroke="#1a7fbf" stroke-width="1.4" stroke-linecap="round" stroke-linejoin="round"/></svg>
<div class="t" style="left:241.9px;top:605.3px;font-size:11.2px;line-height:15px;color:#b9bcc5;letter-spacing:-0.40px;">ANNOUNCEMENTS:</div>
<div class="a" style="left:230.3px;top:625.3px;width:107.4px;height:22.9px;border:1px solid #b5d6e4;border-radius:11.5px;background:#fff;"></div>
<div class="t" style="left:240.4px;top:628.9px;font-size:12.6px;line-height:16px;color:#a9acb5;letter-spacing:-0.37px;">MILES EXEMPT</div>
<div class="a" style="left:340.4px;top:625.3px;width:49.1px;height:22.9px;border:1px solid #b5d6e4;border-radius:11.5px;background:#fff;"></div>
<div class="t" style="left:350.5px;top:628.9px;font-size:12.6px;line-height:16px;color:#a9acb5;letter-spacing:-0.30px;">AS IS</div>
<div class="a" style="left:392.2px;top:625.3px;width:98.2px;height:22.9px;border:1px solid #b5d6e4;border-radius:11.5px;background:#fff;"></div>
<div class="t" style="left:402.3px;top:628.9px;font-size:12.6px;line-height:16px;color:#a9acb5;letter-spacing:-0.31px;">ENGINE INOP</div>
<div class="t" style="left:241.0px;top:688.6px;font-size:12.3px;line-height:16px;color:#999;letter-spacing:-0.16px;">Items per Page:</div>
<div class="a" style="left:334.0px;top:682.2px;width:57.8px;height:28.1px;border:1px solid #e4e5ea;border-radius:3px;background:#fff;"></div>
<div class="t" style="left:346.3px;top:687.8px;font-size:13.2px;line-height:17px;color:#444;letter-spacing:-0.37px;">15</div>
<svg style="left:372.4px;top:693.9px" width="10.5" height="5.5" viewBox="0 0 10.5 5.5"><path d="M0.5 0.5L5.25 5.0L10.0 0.5" fill="none" stroke="#b4b4b8" stroke-width="1.05" stroke-linecap="round" stroke-linejoin="round"/></svg>
<div class="t" style="left:459.2px;top:687.0px;font-size:12.3px;line-height:16px;color:#aaa;letter-spacing:-0.18px;">First</div>
<svg style="left:499px;top:688.5px" width="8" height="13" viewBox="0 0 8 13"><path d="M7 1L1.2 6.5 7 12" fill="none" stroke="#aaa" stroke-width="1.2" stroke-linecap="round" stroke-linejoin="round"/></svg>
<div class="t" style="left:522.3px;top:687.0px;font-size:12.3px;line-height:16px;color:#aaa;letter-spacing:0.06px;">1-6 of 6</div>
<svg style="left:579.5px;top:688.5px" width="8" height="13" viewBox="0 0 8 13"><path d="M1 1l5.8 5.5L1 12" fill="none" stroke="#aaa" stroke-width="1.2" stroke-linecap="round" stroke-linejoin="round"/></svg>
<div class="t" style="left:603.5px;top:687.0px;font-size:12.3px;line-height:16px;color:#aaa;letter-spacing:-0.02px;">Last</div>
<div class="a" style="left:230.5px;top:733.0px;width:1215.1px;height:190.5px;background:#fbfbfd;"></div>
<div class="a" style="left:230.5px;top:733.0px;width:1215.1px;height:22.5px;background:#f1f1f4;"></div>
<div class="a" style="left:230.5px;top:798.4px;width:1215.1px;height:22.6px;background:#dcdde3;"></div>
<div class="a" style="left:230.5px;top:733.0px;width:1215.1px;height:1.0px;background:#e6e6ec;"></div>
<div class="a" style="left:230.5px;top:755.0px;width:1215.1px;height:1.0px;background:#e6e6ec;"></div>
<div class="a" style="left:230.5px;top:777.0px;width:1215.1px;height:1.0px;background:#e6e6ec;"></div>
<div class="a" style="left:230.5px;top:798.0px;width:1215.1px;height:1.0px;background:#e6e6ec;"></div>
<div class="a" style="left:230.5px;top:821.0px;width:1215.1px;height:1.0px;background:#e6e6ec;"></div>
<div class="a" style="left:230.5px;top:842.0px;width:1215.1px;height:1.0px;background:#e6e6ec;"></div>
<div class="a" style="left:230.5px;top:864.0px;width:1215.1px;height:1.0px;background:#e6e6ec;"></div>
<div class="a" style="left:230.5px;top:886.0px;width:1215.1px;height:1.0px;background:#e6e6ec;"></div>
<div class="a" style="left:230.5px;top:907.0px;width:1215.1px;height:1.0px;background:#e6e6ec;"></div>
<div class="a" style="left:230.5px;top:929.0px;width:1215.1px;height:1.0px;background:#e6e6ec;"></div>
<div class="a" style="left:230.0px;top:733.0px;width:1.0px;height:190.5px;background:#e9e9ef;"></div>
<div class="a" style="left:548.0px;top:733.0px;width:1.0px;height:190.5px;background:#e9e9ef;"></div>
<div class="a" style="left:593.0px;top:733.0px;width:1.0px;height:190.5px;background:#e9e9ef;"></div>
<div class="a" style="left:668.0px;top:733.0px;width:1.0px;height:190.5px;background:#e9e9ef;"></div>
<div class="a" style="left:742.0px;top:733.0px;width:1.0px;height:190.5px;background:#e9e9ef;"></div>
<div class="a" style="left:817.0px;top:733.0px;width:1.0px;height:190.5px;background:#e9e9ef;"></div>
<div class="a" style="left:891.0px;top:733.0px;width:1.0px;height:190.5px;background:#e9e9ef;"></div>
<div class="a" style="left:965.0px;top:733.0px;width:1.0px;height:190.5px;background:#e9e9ef;"></div>
<div class="a" style="left:1040.0px;top:733.0px;width:1.0px;height:190.5px;background:#e9e9ef;"></div>
<div class="a" style="left:1114.0px;top:733.0px;width:1.0px;height:190.5px;background:#e9e9ef;"></div>
<div class="a" style="left:1189.0px;top:733.0px;width:1.0px;height:190.5px;background:#e9e9ef;"></div>
<div class="a" style="left:1263.0px;top:733.0px;width:1.0px;height:190.5px;background:#e9e9ef;"></div>
<div class="a" style="left:1445.0px;top:733.0px;width:1.0px;height:190.5px;background:#e9e9ef;"></div>
<div class="t" style="left:389.8px;top:737.6px;font-size:10.8px;line-height:14px;color:#333;font-weight:bold;letter-spacing:0.43px;transform:translateX(-50%);">Item</div>
<div class="t" style="left:571.2px;top:737.6px;font-size:10.8px;line-height:14px;color:#333;font-weight:bold;letter-spacing:0.15px;transform:translateX(-50%);">Ind</div>
<div class="t" style="left:631.1px;top:737.6px;font-size:10.8px;line-height:14px;color:#333;font-weight:bold;letter-spacing:0.70px;transform:translateX(-50%);">Date</div>
<div class="t" style="left:705.6px;top:737.6px;font-size:10.8px;line-height:14px;color:#333;font-weight:bold;letter-spacing:-0.09px;transform:translateX(-50%);">Due Seller</div>
<div class="t" style="left:780.1px;top:737.6px;font-size:10.8px;line-height:14px;color:#333;font-weight:bold;letter-spacing:0.03px;transform:translateX(-50%);">Due Auction</div>
<div class="t" style="left:854.6px;top:737.6px;font-size:10.8px;line-height:14px;color:#333;font-weight:bold;letter-spacing:-0.15px;transform:translateX(-50%);">Payments</div>
<div class="t" style="left:928.8px;top:737.6px;font-size:10.8px;line-height:14px;color:#333;font-weight:bold;letter-spacing:-0.23px;transform:translateX(-50%);">Price</div>
<div class="t" style="left:1003.1px;top:737.6px;font-size:10.8px;line-height:14px;color:#333;font-weight:bold;letter-spacing:-0.54px;transform:translateX(-50%);">Fees</div>
<div class="t" style="left:1077.4px;top:737.6px;font-size:10.8px;line-height:14px;color:#333;font-weight:bold;letter-spacing:-0.30px;transform:translateX(-50%);">Goods</div>
<div class="t" style="left:1151.8px;top:737.6px;font-size:10.8px;line-height:14px;color:#333;font-weight:bold;letter-spacing:-0.49px;transform:translateX(-50%);">Services</div>
<div class="t" style="left:1226.4px;top:737.6px;font-size:10.8px;line-height:14px;color:#333;font-weight:bold;letter-spacing:0.09px;transform:translateX(-50%);">Tax</div>
<svg style="left:238.6px;top:763.7px" width="5" height="6" viewBox="0 0 5 6"><path d="M0.1 0.1L4.9 3 0.1 5.9z" fill="#2f2f35"/></svg>
<div class="t" style="left:252.2px;top:759.7px;font-size:11.5px;line-height:15px;color:#444;letter-spacing:-0.17px;">1056 2010 Ford Focus</div>
<div class="t" style="left:551.7px;top:759.7px;font-size:11.5px;line-height:15px;color:#444;">RO</div>
<div class="t" style="left:596.9px;top:759.7px;font-size:11.5px;line-height:15px;color:#444;">08/11/2022</div>
<div class="t" style="left:671.5px;top:759.7px;font-size:11.5px;line-height:15px;color:#444;">$0.00</div>
<div class="t" style="left:746.0px;top:759.7px;font-size:11.5px;line-height:15px;color:#444;">$0.00</div>
<svg style="left:238.6px;top:785.4px" width="5" height="6" viewBox="0 0 5 6"><path d="M0.1 0.1L4.9 3 0.1 5.9z" fill="#2f2f35"/></svg>
<div class="t" style="left:252.2px;top:781.4px;font-size:11.5px;line-height:15px;color:#444;letter-spacing:-0.06px;">A002 1994 Honda Civic</div>
<div class="t" style="left:551.7px;top:781.4px;font-size:11.5px;line-height:15px;color:#444;">CB</div>
<div class="t" style="left:596.9px;top:781.4px;font-size:11.5px;line-height:15px;color:#444;">08/04/2022</div>
<div class="t" style="left:671.5px;top:781.4px;font-size:11.5px;line-height:15px;color:#444;">$450.00</div>
<div class="t" style="left:746.0px;top:781.4px;font-size:11.5px;line-height:15px;color:#444;">$150.00</div>
<div class="t" style="left:820.5px;top:781.4px;font-size:11.5px;line-height:15px;color:#444;">$525.00</div>
<div class="t" style="left:894.9px;top:781.4px;font-size:11.5px;line-height:15px;color:#444;">$450.00</div>
<div class="t" style="left:969.0px;top:781.4px;font-size:11.5px;line-height:15px;color:#444;">$225.00</div>
<svg style="left:238.6px;top:807.1px" width="5" height="6" viewBox="0 0 5 6"><path d="M0.1 0.1L4.9 3 0.1 5.9z" fill="#2f2f35"/></svg>
<div class="t" style="left:252.2px;top:803.1px;font-size:11.5px;line-height:15px;color:#444;letter-spacing:0.02px;">A005 2009 Nissan Altima</div>
<div class="t" style="left:551.7px;top:803.1px;font-size:11.5px;line-height:15px;color:#444;">CB</div>
<div class="t" style="left:596.9px;top:803.1px;font-size:11.5px;line-height:15px;color:#444;">08/04/2022</div>
<div class="t" style="left:671.5px;top:803.1px;font-size:11.5px;line-height:15px;color:#444;">$700.00</div>
<div class="t" style="left:746.0px;top:803.1px;font-size:11.5px;line-height:15px;color:#444;">$140.00</div>
<div class="t" style="left:820.5px;top:803.1px;font-size:11.5px;line-height:15px;color:#444;">$795.00</div>
<div class="t" style="left:894.9px;top:803.1px;font-size:11.5px;line-height:15px;color:#444;">$700.00</div>
<div class="t" style="left:969.0px;top:803.1px;font-size:11.5px;line-height:15px;color:#444;">$180.00</div>
<div class="t" style="left:1043.4px;top:803.1px;font-size:11.5px;line-height:15px;color:#444;">$55.00</div>
<svg style="left:238.6px;top:828.9px" width="5" height="6" viewBox="0 0 5 6"><path d="M0.1 0.1L4.9 3 0.1 5.9z" fill="#2f2f35"/></svg>
<div class="t" style="left:252.2px;top:824.9px;font-size:11.5px;line-height:15px;color:#444;letter-spacing:-0.02px;">A009 2014 Mazda Mazda5</div>
<div class="t" style="left:551.7px;top:824.9px;font-size:11.5px;line-height:15px;color:#444;">OB</div>
<div class="t" style="left:596.9px;top:824.9px;font-size:11.5px;line-height:15px;color:#444;">08/11/2022</div>
<div class="t" style="left:671.5px;top:824.9px;font-size:11.5px;line-height:15px;color:#444;">$2,000.00</div>
<div class="t" style="left:746.0px;top:824.9px;font-size:11.5px;line-height:15px;color:#444;">$2,360.00</div>
<div class="t" style="left:894.9px;top:824.9px;font-size:11.5px;line-height:15px;color:#444;">$2,000.00</div>
<div class="t" style="left:969.0px;top:824.9px;font-size:11.5px;line-height:15px;color:#444;">$360.00</div>
<svg style="left:238.6px;top:850.6px" width="5" height="6" viewBox="0 0 5 6"><path d="M0.1 0.1L4.9 3 0.1 5.9z" fill="#2f2f35"/></svg>
<div class="t" style="left:252.2px;top:846.6px;font-size:11.5px;line-height:15px;color:#444;letter-spacing:-0.10px;">A110 2014 Ford Fusion</div>
<div class="t" style="left:551.7px;top:846.6px;font-size:11.5px;line-height:15px;color:#444;">OB</div>
<div class="t" style="left:596.9px;top:846.6px;font-size:11.5px;line-height:15px;color:#444;">08/11/2022</div>
<div class="t" style="left:671.5px;top:846.6px;font-size:11.5px;line-height:15px;color:#444;">$3,700.00</div>
<div class="t" style="left:746.0px;top:846.6px;font-size:11.5px;line-height:15px;color:#444;">$4,092.00</div>
<div class="t" style="left:894.9px;top:846.6px;font-size:11.5px;line-height:15px;color:#444;">$3,700.00</div>
<div class="t" style="left:969.0px;top:846.6px;font-size:11.5px;line-height:15px;color:#444;">$265.00</div>
<div class="t" style="left:1043.4px;top:846.6px;font-size:11.5px;line-height:15px;color:#444;">$127.00</div>
<svg style="left:238.6px;top:872.3px" width="5" height="6" viewBox="0 0 5 6"><path d="M0.1 0.1L4.9 3 0.1 5.9z" fill="#2f2f35"/></svg>
<div class="t" style="left:252.2px;top:868.3px;font-size:11.5px;line-height:15px;color:#444;letter-spacing:-0.07px;">B026 2009 Nissan Murano</div>
<div class="t" style="left:551.7px;top:868.3px;font-size:11.5px;line-height:15px;color:#444;">CB</div>
<div class="t" style="left:596.9px;top:868.3px;font-size:11.5px;line-height:15px;color:#444;">08/04/2022</div>
<div class="t" style="left:671.5px;top:868.3px;font-size:11.5px;line-height:15px;color:#444;">$1,100.00</div>
<div class="t" style="left:746.0px;top:868.3px;font-size:11.5px;line-height:15px;color:#444;">$85.00</div>
<div class="t" style="left:820.5px;top:868.3px;font-size:11.5px;line-height:15px;color:#444;">$1,265.00</div>
<div class="t" style="left:894.9px;top:868.3px;font-size:11.5px;line-height:15px;color:#444;">$1,100.00</div>
<div class="t" style="left:969.0px;top:868.3px;font-size:11.5px;line-height:15px;color:#444;">$250.00</div>
<svg style="left:233.1px;top:802.6px" width="917.9" height="26.0" viewBox="0 0 917.9 26.0"><rect x="1.35" y="1.35" width="915.20" height="23.30" rx="1.2" fill="none" stroke="#d0161b" stroke-width="2.7"/></svg>
<div class="a" style="left:0.0px;top:923.0px;width:306.5px;height:3.0px;background:#dedede;"></div>
<div class="a" style="left:0.0px;top:923.0px;width:306.5px;height:1.0px;background:#c4c4c4;"></div>
<div class="a" style="left:306.5px;top:923.0px;width:1373.5px;height:3.0px;background:#0e1a22;"></div>
<div class="a" style="left:930.7px;top:923.6px;width:43.6px;height:2.4px;background:#2a3a46;"></div>
</body></html>
